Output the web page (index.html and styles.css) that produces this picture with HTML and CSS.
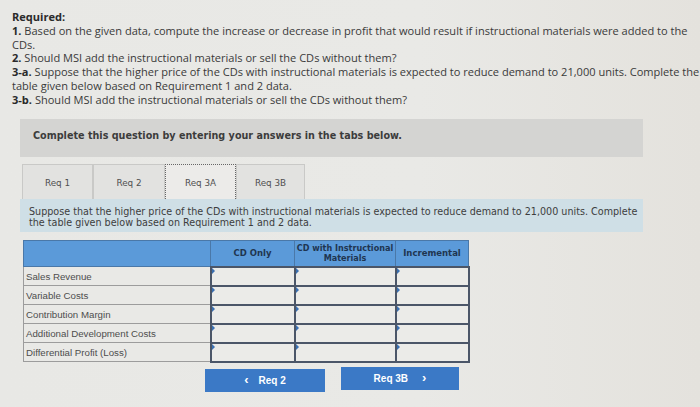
FILE: index.html
```html
<!DOCTYPE html>
<html>
<head>
<meta charset="utf-8">
<link rel="stylesheet" href="styles.css">
</head>
<body>
<div class="page">
  <div class="req">
    <div class="req-title">Required:</div>
    <div><b>1.</b> Based on the given data, compute the increase or decrease in profit that would result if instructional materials were added to the CDs.</div>
    <div><b>2.</b> Should MSI add the instructional materials or sell the CDs without them?</div>
    <div><b>3-a.</b> Suppose that the higher price of the CDs with instructional materials is expected to reduce demand to 21,000 units. Complete the table given below based on Requirement 1 and 2 data.</div>
    <div><b>3-b.</b> Should MSI add the instructional materials or sell the CDs without them?</div>
  </div>

  <div class="banner">Complete this question by entering your answers in the tabs below.</div>

  <div class="tabs">
    <div class="tab t1">Req 1</div>
    <div class="tab t2">Req 2</div>
    <div class="tab t3 active">Req 3A</div>
    <div class="tab t4">Req 3B</div>
  </div>

  <div class="panel">Suppose that the higher price of the CDs with instructional materials is expected to reduce demand to 21,000 units. Complete the table given below based on Requirement 1 and 2 data.</div>

  <table class="grid">
    <thead>
      <tr>
        <th class="c-label"></th>
        <th class="c-a">CD Only</th>
        <th class="c-b"><span class="nw">CD with Instructional</span><br>Materials</th>
        <th class="c-c">Incremental</th>
      </tr>
    </thead>
    <tbody>
      <tr><td class="label">Sales Revenue</td><td class="in"></td><td class="in"></td><td class="in"></td></tr>
      <tr><td class="label">Variable Costs</td><td class="in"></td><td class="in"></td><td class="in"></td></tr>
      <tr><td class="label">Contribution Margin</td><td class="in"></td><td class="in"></td><td class="in"></td></tr>
      <tr><td class="label">Additional Development Costs</td><td class="in"></td><td class="in"></td><td class="in"></td></tr>
      <tr><td class="label">Differential Profit (Loss)</td><td class="in"></td><td class="in"></td><td class="in"></td></tr>
    </tbody>
  </table>

  <div class="nav">
    <div class="btn prev"><span class="chev">&#8249;</span><span>Req 2</span></div>
    <div class="btn next"><span>Req 3B</span><span class="chev">&#8250;</span></div>
  </div>
</div>
</body>
</html>
```

FILE: styles.css
```css
html, body {
  margin: 0;
  padding: 0;
  background: #e7e6e2;
}
.page {
  width: 700px;
  height: 407px;
  overflow: hidden;
  box-sizing: border-box;
  padding: 10px 0 0 12px;
  background: linear-gradient(90deg, #e8e8e5 0%, #e9e9e6 60%, #e4e2dd 100%);
}
.req {
  font-family: "Open Sans", "Liberation Sans", sans-serif;
  font-size: 11.05px;
  line-height: 13.8px;
  color: #3a3a3a;
  width: 690px;
}
.req b { font-weight: 700; color: #2a2a2a; }
.req-title { font-weight: 700; color: #2a2a2a; }

.banner {
  margin: 12px 0 0 8px;
  width: 623px;
  height: 38px;
  box-sizing: border-box;
  background: #d4d4d2;
  font-family: "DejaVu Sans", Verdana, sans-serif;
  font-weight: 700;
  font-size: 9.65px;
  color: #3c3c3c;
  padding: 11px 0 0 13px;
}

.tabs {
  display: flex;
  margin: 7px 0 0 10px;
  height: 35px;
}
.tab {
  box-sizing: border-box;
  height: 35px;
  background: #e2e2e0;
  border: 1px solid #c9c9c7;
  border-bottom: none;
  font-family: "DejaVu Sans", Verdana, sans-serif;
  font-size: 8.8px;
  color: #505050;
  display: flex;
  align-items: center;
  justify-content: center;
  padding-top: 2px;
}
.t1 { width: 71px; }
.t2 { width: 72px; }
.t3 { width: 71px; }
.t4 { width: 69px; }
.tab.active {
  background: #ecebe9;
  border: 1px dotted #666;
  border-bottom: none;
}

.panel {
  margin-left: 8px;
  width: 623px;
  height: 33px;
  box-sizing: border-box;
  background: #cfdfe6;
  font-family: "DejaVu Sans", Verdana, sans-serif;
  font-size: 9.6px;
  line-height: 11.5px;
  color: #3d3d3d;
  padding: 7px 0 0 9px;
}

.grid {
  margin: 8px 0 0 11px;
  border-collapse: collapse;
  table-layout: fixed;
  width: 441px;
}
.grid th {
  height: 25px;
  padding: 0;
  background: #5b9ad9;
  border: 1px solid #4a78a8;
  font-family: "DejaVu Sans", Verdana, sans-serif;
  font-size: 8.5px;
  line-height: 10px;
  font-weight: 700;
  color: #1f3550;
  text-align: center;
}
.grid th.c-b { font-size: 8.1px; }
.nw { white-space: nowrap; }
.c-label { width: 186px; }
.c-a { width: 83px; }
.c-b { width: 100px; }
.c-c { width: 72px; }
.grid td {
  height: 17px;
  padding: 0;
}
.grid td.label {
  border: 1px solid #9c9c9c;
  font-family: "Liberation Sans", Arial, sans-serif;
  font-size: 9.7px;
  color: #4d4d4d;
  padding-left: 2px;
  background: #e9e9e6;
}
.grid td.in {
  border: 2px solid #4b5668;
  background: #ebebe8;
  position: relative;
}
.grid td.in::before {
  content: "";
  position: absolute;
  left: 0;
  top: 0;
  border-top: 3px solid transparent;
  border-bottom: 3px solid transparent;
  border-left: 3px solid #3a6fb0;
}

.nav {
  display: flex;
  gap: 16px;
  margin: 5px 0 0 193px;
}
.btn {
  height: 23px;
  background: #3b79c6;
  color: #fff;
  font-family: "Liberation Sans", Arial, sans-serif;
  font-weight: 700;
  font-size: 10px;
  display: flex;
  align-items: center;
  justify-content: center;
  gap: 10px;
}
.btn.prev { width: 120px; margin-top: 1px; }
.btn.next { width: 118px; margin-top: -1px; gap: 14px; }
.chev { font-size: 13px; font-weight: 700; line-height: 1; margin-top: -2px; }
```
